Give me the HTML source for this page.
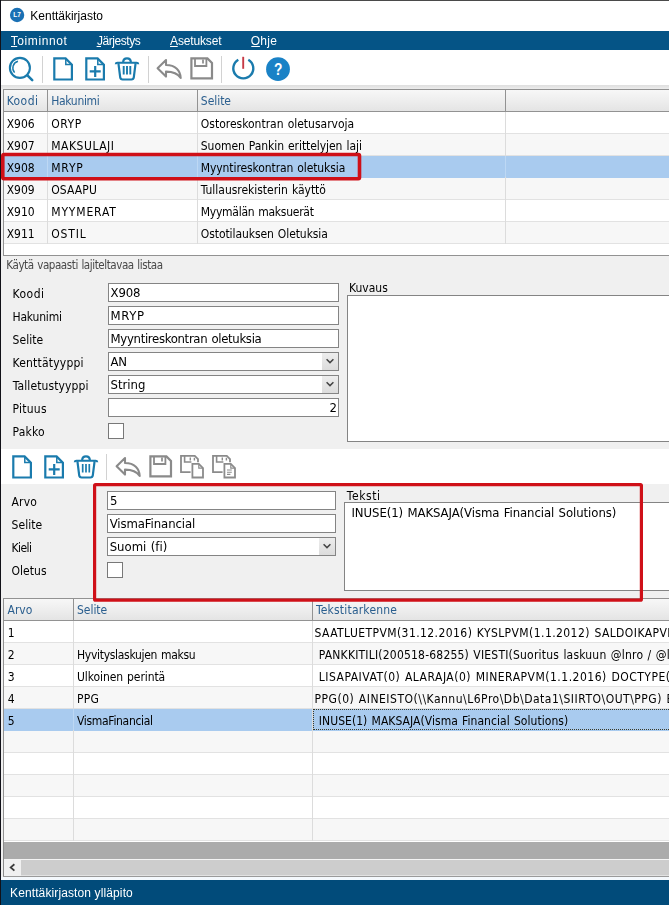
<!DOCTYPE html>
<html lang="fi">
<head>
<meta charset="utf-8">
<title>Kenttäkirjasto</title>
<style>
html,body{margin:0;padding:0}
body{width:669px;height:905px;overflow:hidden;position:relative;background:#f0f0f0;font-family:'DejaVu Sans Condensed','DejaVu Sans','Liberation Sans',sans-serif;font-size:12px;color:#000}
.a{position:absolute}
.t{position:absolute;white-space:pre;line-height:1;font-stretch:condensed;font-family:'DejaVu Sans Condensed','DejaVu Sans','Liberation Sans',sans-serif}
.t.s{font-stretch:normal;font-family:'Liberation Sans','DejaVu Sans',sans-serif}
#titlebar{left:1px;top:1px;width:668px;height:30px;background:#fff}
#menubar{left:1px;top:31px;width:668px;height:19px;background:#055486}
#tb1{left:1px;top:50px;width:668px;height:35px;background:#fff}
#tb1s{left:1px;top:85px;width:668px;height:4px;background:linear-gradient(#dedede,#ececec)}
#tb2{left:1px;top:449px;width:668px;height:35px;background:#fff}
.sep{position:absolute;width:1px;background:#d4d4d4}
.grid{position:absolute;background:#fff;border:1px solid #929292;border-right:0;box-sizing:border-box;overflow:hidden}
.hdr{position:absolute;left:0;top:0;right:0;height:21px;background:linear-gradient(#f7f7f7,#ececec 60%,#e4e4e4);border-bottom:1px solid #929292}
.hsep{position:absolute;top:0;width:1px;height:22px;background:#929292}
.row{position:absolute;left:0;right:0;height:21px;border-bottom:1px solid #e2e2e2;background:#fff}
.row.alt{background:#f7f7f7}
.row.sel{background:#a9cbef;border-bottom-color:#a9cbef}
.vsep{position:absolute;width:1px;background:#dcdcdc}
.inp{position:absolute;box-sizing:border-box;height:19px;background:#fff;border:1px solid #848484}
.cb{position:absolute;box-sizing:border-box;width:16px;height:16px;background:#fff;border:1px solid #787878}
.dd{position:absolute;right:0;top:0;width:16px;height:17px;background:linear-gradient(#ededed,#dcdcdc)}
.ta{position:absolute;box-sizing:border-box;background:#fff;border:1px solid #848484;border-right:0}
.red{position:absolute;box-sizing:border-box;border:4px solid #d2121c;border-radius:2px}
#status{left:1px;top:880px;width:668px;height:25px;background:#014b7a}
</style>
</head>
<body>
<!-- window frame -->
<div class="a" style="left:0;top:0;width:669px;height:1px;background:#4a4a4a"></div>
<div class="a" style="left:0;top:0;width:1px;height:905px;background:#111118"></div>
<div class="a" id="titlebar"></div>
<div class="a" id="menubar"></div>
<div class="a" id="tb1"></div>
<div class="a" id="tb1s"></div>
<!--LOGO-->
<!--MENU_UNDERLINES-->
<!-- grid 1 -->
<div class="grid" style="left:3px;top:89px;width:666px;height:167px">
 <div class="hdr"></div>
 <div class="row" style="top:22px"></div>
 <div class="row alt" style="top:44px"></div>
 <div class="row sel" style="top:66px"></div>
 <div class="row alt" style="top:88px"></div>
 <div class="row" style="top:110px"></div>
 <div class="row alt" style="top:132px"></div>
 <div class="vsep" style="left:43px;top:22px;height:132px"></div>
 <div class="vsep" style="left:193px;top:22px;height:132px"></div>
 <div class="vsep" style="left:501px;top:22px;height:132px"></div>
 <div class="vsep" style="left:43px;top:66px;height:21px;background:#bdd8f4"></div>
 <div class="vsep" style="left:193px;top:66px;height:21px;background:#bdd8f4"></div>
 <div class="vsep" style="left:501px;top:66px;height:21px;background:#bdd8f4"></div>
 <div class="hsep" style="left:43px"></div>
 <div class="hsep" style="left:193px"></div>
 <div class="hsep" style="left:501px"></div>
</div>
<!-- form 1 -->
<div class="inp" style="left:108px;top:283px;width:231px"></div>
<div class="inp" style="left:108px;top:306px;width:231px"></div>
<div class="inp" style="left:108px;top:329px;width:231px"></div>
<div class="inp" style="left:108px;top:352px;width:231px"><div class="dd"><svg width="16" height="17" viewBox="0 0 16 17" style="position:absolute;left:0;top:0"><path d="M4.6 6.2 L8 9.6 L11.4 6.2" fill="none" stroke="#444" stroke-width="1.5"/></svg></div></div>
<div class="inp" style="left:108px;top:375px;width:231px"><div class="dd"><svg width="16" height="17" viewBox="0 0 16 17" style="position:absolute;left:0;top:0"><path d="M4.6 6.2 L8 9.6 L11.4 6.2" fill="none" stroke="#444" stroke-width="1.5"/></svg></div></div>
<div class="inp" style="left:108px;top:398px;width:231px"></div>
<div class="cb" style="left:108px;top:423px"></div>
<div class="ta" style="left:347px;top:295px;width:322px;height:147px"></div>
<!-- toolbar 2 -->
<div class="a" id="tb2"></div>
<!-- form 2 -->
<div class="inp" style="left:107px;top:491px;width:229px"></div>
<div class="inp" style="left:107px;top:514px;width:229px"></div>
<div class="inp" style="left:107px;top:537px;width:229px"><div class="dd"><svg width="16" height="17" viewBox="0 0 16 17" style="position:absolute;left:0;top:0"><path d="M4.6 6.2 L8 9.6 L11.4 6.2" fill="none" stroke="#444" stroke-width="1.5"/></svg></div></div>
<div class="cb" style="left:107px;top:562px"></div>
<div class="ta" style="left:344px;top:502px;width:325px;height:89px"></div>
<!-- grid 2 -->
<div class="grid" style="left:3px;top:598px;width:666px;height:244px;border-bottom:0">
 <div class="hdr"></div>
 <div class="row" style="top:22px"></div>
 <div class="row alt" style="top:44px"></div>
 <div class="row" style="top:66px"></div>
 <div class="row alt" style="top:88px"></div>
 <div class="row sel" style="top:110px"></div>
 <div class="row alt" style="top:132px"></div>
 <div class="row" style="top:154px"></div>
 <div class="row alt" style="top:176px"></div>
 <div class="row" style="top:198px"></div>
 <div class="row alt" style="top:220px"></div>
 <div class="vsep" style="left:69px;top:22px;height:220px"></div>
 <div class="vsep" style="left:308px;top:22px;height:220px"></div>
 <div class="vsep" style="left:69px;top:110px;height:21px;background:#bdd8f4"></div>
 <div class="hsep" style="left:69px"></div>
 <div class="hsep" style="left:308px"></div>
 <div class="a" style="left:309px;top:110px;width:360px;height:21px;box-sizing:border-box;border:1px dotted #3a3a2a;border-right:0"></div>
</div>
<div class="a" style="left:4px;top:842px;width:665px;height:17px;background:#ababab"></div>
<div class="a" style="left:4px;top:859px;width:665px;height:1px;background:#f4f4f4"></div>
<div class="a" style="left:4px;top:860px;width:665px;height:15px;background:#cdcdcd"></div>
<div class="a" style="left:4px;top:860px;width:17px;height:16px;background:#f0f0f0"></div>
<div class="a" style="left:21px;top:875px;width:648px;height:1px;background:#e2e2e2"></div>
<div class="a" style="left:3px;top:842px;width:1px;height:35px;background:#8c8c8c"></div>
<!--SCROLLARROW-->
<div class="a" style="left:3px;top:876px;width:666px;height:1px;background:#9a9a9a"></div>
<div class="a" style="left:1px;top:877px;width:668px;height:3px;background:#f4f8fc"></div>
<div class="a" id="status"></div>
<svg class="a" style="left:0;top:0" width="669" height="905" viewBox="0 0 669 905" fill="none" stroke-linejoin="miter">
<!-- logo -->
<circle cx="17.1" cy="15" r="7.15" fill="#1a70b4"/>
<text x="17.1" y="17.4" text-anchor="middle" font-family="'Liberation Sans',sans-serif" font-weight="bold" font-size="6.5" fill="#fff">L7</text>
<!-- menu accelerator underlines -->
<g stroke="#fff" stroke-width="1">
<path d="M11 46.5H17.2M96.6 46.5H101M170 46.5H177.7M251.3 46.5H259.9"/>
</g>
<!-- toolbar 1 separators -->
<g stroke="#d2d2d2" stroke-width="1"><path d="M42.5 56V83M148.5 56V83M221.5 56V83"/></g>
<!-- toolbar 2 separator -->
<g stroke="#d2d2d2" stroke-width="1"><path d="M106.5 454V480"/></g>
<!-- magnifier -->
<g stroke="#1a7bad">
<circle cx="19.9" cy="67.9" r="10" stroke-width="2.1"/>
<path d="M27.4 75.4L32.2 80.2" stroke-width="2.6" stroke-linecap="round"/>
<path d="M14.6 72.6A7 7 0 0 1 18 61.2" stroke-width="1.4"/>
</g>
<!-- toolbar 1 blue icons -->
<g id="bluegrp1" stroke="#1a7bad" stroke-width="2.2">
<path d="M54.3 58.4H65.6L71.9 64.7V79.5H54.3Z"/><path d="M65.8 58.8V64.5H71.5" stroke-width="1.5"/>
<path d="M86.3 58.4H97.6L103.9 64.7V79.5H86.3Z"/><path d="M97.8 58.8V64.5H103.5" stroke-width="1.5"/>
<path d="M89.7 71.4H100.7M95.2 65.9V76.9"/>
<path d="M115.7 64.2Q115.8 62.7 117.4 62.7H136.6Q138.2 62.7 138.3 64.2" stroke-width="2"/>
<path d="M123.2 62Q123.2 58.4 127 58.4Q130.8 58.4 130.8 62"/>
<path d="M118.4 63.2L120.2 77.4Q120.5 79.5 122.6 79.5H131.4Q133.5 79.5 133.8 77.4L135.6 63.2"/>
<path d="M123.7 66V74.4M127 66V74.4M130.3 66V74.4" stroke-width="1.9"/>
</g>
<!-- toolbar 1 gray icons -->
<g stroke="#8a8a8a" stroke-width="2.1" stroke-linejoin="round">
<path d="M157.6 68.2L166 60V65C175.5 65 180.4 70.5 180.7 78C177.5 73 173 71.6 166 71.6V76.6Z"/>
<path d="M191.4 58.4H207.4L212 63V78.4H191.4Z" stroke-width="2.2" stroke-linejoin="miter"/>
<path d="M195 58.6V66H206.4V58.6" stroke-width="1.8" stroke-linejoin="miter"/>
<path d="M203 59.4V63.6" stroke-width="1.7"/>
</g>
<!-- power -->
<path d="M248.3 59.7A10 10 0 1 1 238.3 59.7" stroke="#1a7bad" stroke-width="2.4"/>
<path d="M243.2 56.8V68.8" stroke="#c63a46" stroke-width="1.9"/>
<!-- help -->
<circle cx="278" cy="69.2" r="11.9" fill="#1a82c6"/>
<text transform="translate(278.2 75) scale(0.86 1)" x="0" y="0" text-anchor="middle" font-family="'Liberation Sans',sans-serif" font-weight="bold" font-size="16" fill="#fff">?</text>
<!-- toolbar 2 blue icons -->
<g stroke="#1a7bad" stroke-width="2.2" transform="translate(-41 398)">
<path d="M54.3 58.4H65.6L71.9 64.7V79.5H54.3Z"/><path d="M65.8 58.8V64.5H71.5" stroke-width="1.5"/>
<path d="M86.3 58.4H97.6L103.9 64.7V79.5H86.3Z"/><path d="M97.8 58.8V64.5H103.5" stroke-width="1.5"/>
<path d="M89.7 71.4H100.7M95.2 65.9V76.9"/>
<path d="M115.7 64.2Q115.8 62.7 117.4 62.7H136.6Q138.2 62.7 138.3 64.2" stroke-width="2"/>
<path d="M123.2 62Q123.2 58.4 127 58.4Q130.8 58.4 130.8 62"/>
<path d="M118.4 63.2L120.2 77.4Q120.5 79.5 122.6 79.5H131.4Q133.5 79.5 133.8 77.4L135.6 63.2"/>
<path d="M123.7 66V74.4M127 66V74.4M130.3 66V74.4" stroke-width="1.7"/>
</g>
<!-- toolbar 2 gray icons -->
<g stroke="#8a8a8a" stroke-width="2.1" stroke-linejoin="round" transform="translate(-41 398)">
<path d="M157.6 68.2L166 60V65C175.5 65 180.4 70.5 180.7 78C177.5 73 173 71.6 166 71.6V76.6Z"/>
<path d="M191.4 58.4H207.4L212 63V78.4H191.4Z" stroke-width="2.2" stroke-linejoin="miter"/>
<path d="M195 58.6V66H206.4V58.6" stroke-width="1.8" stroke-linejoin="miter"/>
<path d="M203 59.4V63.6" stroke-width="1.7"/>
</g>
<!-- save+copy -->
<g stroke="#8b8b8b" stroke-width="1.8">
<path d="M190.6 472.2H181V455.8H194.8L198 459V462.2"/>
<path d="M184.6 456V462H191.4" stroke-width="1.6"/>
<path d="M190.3 457.5V460.6M194.4 457.8V460.6" stroke-width="1.4"/>
<path d="M192.4 463.9H198.8L203 468.1V477.5H192.4Z" fill="#fff"/>
<path d="M198.8 464.2V468.1H202.7" stroke-width="1.2"/>
</g>
<!-- save+doc -->
<g stroke="#8b8b8b" stroke-width="1.8" transform="translate(32 0)">
<path d="M190.6 472.2H181V455.8H194.8L198 459V462.2"/>
<path d="M184.6 456V462H191.4" stroke-width="1.6"/>
<path d="M190.3 457.5V460.6M194.4 457.8V460.6" stroke-width="1.4"/>
<path d="M192.4 463.9H198.8L203 468.1V477.5H192.4Z" fill="#fff"/>
<path d="M198.8 464.2V468.1H202.7" stroke-width="1.2"/>
<path d="M195 470H199.8M195 472.2H199.8M195 474.4H198.4" stroke-width="1.1"/>
</g>
<!-- scrollbar arrow -->
<path d="M14.4 864.2L10.7 867.4L14.4 870.6" stroke="#3c3c3c" stroke-width="1.8"/>
</svg>

<div class="a" id="txt" style="left:0;top:0;width:669px;height:905px;will-change:transform">
<span class="t s" style="top:10.00px;font-size:12px;left:30.32px;letter-spacing:-0.009px;">Kenttäkirjasto</span>
<span class="t s" style="top:34.70px;font-size:12px;left:10.72px;letter-spacing:0.590px;color:#fff;">Toiminnot</span>
<span class="t s" style="top:34.70px;font-size:12px;left:97.02px;letter-spacing:-0.458px;color:#fff;">Järjestys</span>
<span class="t s" style="top:34.70px;font-size:12px;left:170.12px;letter-spacing:-0.165px;color:#fff;">Asetukset</span>
<span class="t s" style="top:34.70px;font-size:12px;left:250.72px;letter-spacing:0.307px;color:#fff;">Ohje</span>
<span class="t" style="top:94.60px;font-size:12px;left:6.72px;letter-spacing:0.408px;color:#2a5e8e;">Koodi</span>
<span class="t" style="top:94.60px;font-size:12px;left:51.22px;letter-spacing:-0.321px;color:#2a5e8e;">Hakunimi</span>
<span class="t" style="top:94.60px;font-size:12px;left:200.82px;letter-spacing:-0.039px;color:#2a5e8e;">Selite</span>
<span class="t" style="top:117.50px;font-size:12px;left:6.72px;letter-spacing:-0.040px;">X906</span>
<span class="t" style="top:117.50px;font-size:12px;left:51.22px;letter-spacing:0.579px;">ORYP</span>
<span class="t" style="top:117.50px;font-size:12px;left:200.82px;letter-spacing:-0.006px;word-spacing:0.7px;">Ostoreskontran oletusarvoja</span>
<span class="t" style="top:139.50px;font-size:12px;left:6.72px;letter-spacing:-0.040px;">X907</span>
<span class="t" style="top:139.50px;font-size:12px;left:51.22px;letter-spacing:0.525px;">MAKSULAJI</span>
<span class="t" style="top:139.50px;font-size:12px;left:200.82px;letter-spacing:-0.063px;word-spacing:0.7px;">Suomen Pankin erittelyjen laji</span>
<span class="t" style="top:161.50px;font-size:12px;left:6.72px;letter-spacing:-0.040px;">X908</span>
<span class="t" style="top:161.50px;font-size:12px;left:51.22px;letter-spacing:0.808px;">MRYP</span>
<span class="t" style="top:161.50px;font-size:12px;left:200.82px;letter-spacing:-0.099px;word-spacing:0.7px;">Myyntireskontran oletuksia</span>
<span class="t" style="top:183.50px;font-size:12px;left:6.72px;letter-spacing:-0.040px;">X909</span>
<span class="t" style="top:183.50px;font-size:12px;left:51.22px;letter-spacing:0.097px;">OSAAPU</span>
<span class="t" style="top:183.50px;font-size:12px;left:200.82px;letter-spacing:-0.031px;word-spacing:0.7px;">Tullausrekisterin käyttö</span>
<span class="t" style="top:205.50px;font-size:12px;left:6.72px;letter-spacing:-0.040px;">X910</span>
<span class="t" style="top:205.50px;font-size:12px;left:51.22px;letter-spacing:0.840px;">MYYMERAT</span>
<span class="t" style="top:205.50px;font-size:12px;left:200.82px;letter-spacing:-0.265px;word-spacing:0.7px;">Myymälän maksuerät</span>
<span class="t" style="top:227.50px;font-size:12px;left:6.72px;letter-spacing:-0.040px;">X911</span>
<span class="t" style="top:227.50px;font-size:12px;left:51.22px;letter-spacing:0.860px;">OSTIL</span>
<span class="t" style="top:227.50px;font-size:12px;left:200.82px;letter-spacing:-0.081px;word-spacing:0.7px;">Ostotilauksen Oletuksia</span>
<span class="t" style="top:260.00px;font-size:11.5px;left:6.34px;letter-spacing:-0.425px;word-spacing:0.7px;color:#484848;">Käytä vapaasti lajiteltavaa listaa</span>
<span class="t" style="top:288.00px;font-size:12px;left:12.52px;letter-spacing:0.483px;">Koodi</span>
<span class="t" style="top:311.00px;font-size:12px;left:12.52px;letter-spacing:-0.193px;">Hakunimi</span>
<span class="t" style="top:334.00px;font-size:12px;left:12.52px;letter-spacing:0.061px;">Selite</span>
<span class="t" style="top:357.00px;font-size:12px;left:12.52px;letter-spacing:0.210px;">Kenttätyyppi</span>
<span class="t" style="top:380.00px;font-size:12px;left:12.82px;letter-spacing:0.100px;">Talletustyyppi</span>
<span class="t" style="top:403.00px;font-size:12px;left:12.52px;letter-spacing:0.257px;">Pituus</span>
<span class="t" style="top:426.00px;font-size:12px;left:12.52px;letter-spacing:0.204px;">Pakko</span>
<span class="t" style="top:285.70px;font-size:13px;left:110.58px;letter-spacing:-0.125px;">X908</span>
<span class="t" style="top:308.70px;font-size:13px;left:110.58px;letter-spacing:0.625px;">MRYP</span>
<span class="t" style="top:331.70px;font-size:13px;left:110.58px;letter-spacing:-0.319px;word-spacing:0.7px;">Myyntireskontran oletuksia</span>
<span class="t" style="top:354.70px;font-size:13px;left:110.58px;letter-spacing:-0.280px;">AN</span>
<span class="t" style="top:377.70px;font-size:13px;left:110.58px;letter-spacing:-0.027px;">String</span>
<span class="t" style="top:400.70px;font-size:13px;right:332.0px;">2</span>
<span class="t" style="top:281.70px;font-size:12px;left:349.02px;">Kuvaus</span>
<span class="t" style="top:496.00px;font-size:12px;left:11.52px;letter-spacing:0.156px;">Arvo</span>
<span class="t" style="top:519.10px;font-size:12px;left:11.52px;letter-spacing:0.061px;">Selite</span>
<span class="t" style="top:542.20px;font-size:12px;left:11.52px;letter-spacing:-0.564px;">Kieli</span>
<span class="t" style="top:565.30px;font-size:12px;left:11.52px;letter-spacing:0.047px;">Oletus</span>
<span class="t" style="top:494.20px;font-size:13px;left:109.88px;">5</span>
<span class="t" style="top:517.20px;font-size:13px;left:109.68px;letter-spacing:-0.083px;">VismaFinancial</span>
<span class="t" style="top:540.20px;font-size:13px;left:109.68px;letter-spacing:0.012px;word-spacing:0.7px;">Suomi (fi)</span>
<span class="t" style="top:489.80px;font-size:12px;left:346.82px;letter-spacing:0.594px;">Teksti</span>
<span class="t" style="top:506.20px;font-size:13px;left:351.48px;letter-spacing:-0.066px;word-spacing:0.7px;">INUSE(1) MAKSAJA(Visma Financial Solutions)</span>
<span class="t" style="top:603.70px;font-size:12px;left:7.52px;letter-spacing:-0.011px;color:#2a5e8e;">Arvo</span>
<span class="t" style="top:603.70px;font-size:12px;left:77.02px;letter-spacing:-0.039px;color:#2a5e8e;">Selite</span>
<span class="t" style="top:603.70px;font-size:12px;left:315.92px;letter-spacing:0.207px;color:#2a5e8e;">Tekstitarkenne</span>
<span class="t" style="top:626.70px;font-size:12px;left:7.82px;">1</span>
<span class="t" style="top:648.70px;font-size:12px;left:7.82px;">2</span>
<span class="t" style="top:648.70px;font-size:12px;left:77.02px;letter-spacing:-0.300px;word-spacing:0.7px;">Hyvityslaskujen maksu</span>
<span class="t" style="top:670.70px;font-size:12px;left:7.82px;">3</span>
<span class="t" style="top:670.70px;font-size:12px;left:77.02px;letter-spacing:-0.083px;word-spacing:0.7px;">Ulkoinen perintä</span>
<span class="t" style="top:692.70px;font-size:12px;left:7.82px;">4</span>
<span class="t" style="top:692.70px;font-size:12px;left:77.02px;letter-spacing:0.195px;">PPG</span>
<span class="t" style="top:714.70px;font-size:12px;left:7.82px;">5</span>
<span class="t" style="top:714.70px;font-size:12px;left:77.02px;letter-spacing:-0.308px;">VismaFinancial</span>
<span class="t" style="top:626.70px;font-size:12px;left:314.52px;letter-spacing:0.424px;word-spacing:0.7px;">SAATLUETPVM(31.12.2016) KYSLPVM(1.1.2012) SALDOIKAPVM(1.1.2016)</span>
<span class="t" style="top:648.70px;font-size:12px;left:318.82px;letter-spacing:0.202px;word-spacing:0.7px;">PANKKITILI(200518-68255) VIESTI(Suoritus laskuun @lnro / @lpvm)</span>
<span class="t" style="top:670.70px;font-size:12px;left:318.82px;letter-spacing:0.505px;word-spacing:0.7px;">LISAPAIVAT(0) ALARAJA(0) MINERAPVM(1.1.2016) DOCTYPE(1)</span>
<span class="t" style="top:692.70px;font-size:12px;left:314.52px;letter-spacing:0.507px;word-spacing:0.7px;">PPG(0) AINEISTO(\\Kannu\L6Pro\Db\Data1\SIIRTO\OUT\PPG) ERA(1)</span>
<span class="t" style="top:714.70px;font-size:12px;left:318.82px;letter-spacing:0.052px;word-spacing:0.7px;">INUSE(1) MAKSAJA(Visma Financial Solutions)</span>
<span class="t s" style="top:886.70px;font-size:12px;left:10.02px;letter-spacing:0.117px;color:#fff;">Kenttäkirjaston ylläpito</span>
</div>
<!-- red highlight rectangles -->
<svg class="a" style="left:0;top:0" width="669" height="905" viewBox="0 0 669 905" fill="none" stroke="#cf1018">
<rect x="2.8" y="154.5" width="356.7" height="24.2" rx="1.2" stroke-width="3.6"/>
<rect x="94.6" y="484.6" width="546.8" height="115.6" rx="1" stroke-width="3.2"/>
</svg>
</body>
</html>
